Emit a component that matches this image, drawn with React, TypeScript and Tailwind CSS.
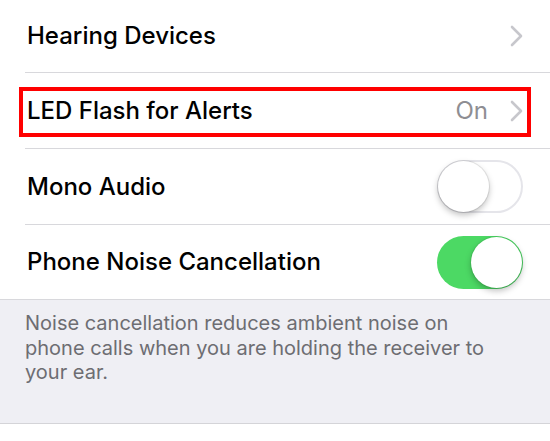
import React from "react";

function Chevron() {
  return (
    <svg width="13" height="22" viewBox="0 0 13 22" className="shrink-0">
      <path d="M2 2 L11 11 L2 20" fill="none" stroke="#c7c7cc" strokeWidth="2.6" strokeLinecap="round" strokeLinejoin="round" />
    </svg>
  );
}

function Toggle({ on }: { on: boolean }) {
  if (on) {
    return (
      <div className="relative h-[53px] w-[86px] shrink-0 rounded-full bg-[#4cd964]">
        <div className="absolute right-[1px] top-[1px] h-[51px] w-[51px] rounded-full bg-white shadow-[0_3px_6px_rgba(0,0,0,0.25),0_0_0_1px_rgba(0,0,0,0.06)]" />
      </div>
    );
  }
  return (
    <div className="relative h-[53px] w-[86px] shrink-0 rounded-full border-2 border-[#e5e5ea] bg-white">
      <div className="absolute left-[-1px] top-[-1px] h-[51px] w-[51px] rounded-full bg-white shadow-[0_3px_6px_rgba(0,0,0,0.25),0_0_0_1px_rgba(0,0,0,0.08)]" />
    </div>
  );
}

export default function App() {
  const font = { fontFamily: "Inter, 'Noto Sans', sans-serif" };
  return (
    <div className="h-[441px] w-[550px] overflow-hidden bg-white" style={font}>
      <div className="flex h-[72px] items-center justify-between pl-[27px] pr-[27px]">
        <span className="text-[24px] font-medium text-black">Hearing Devices</span>
        <Chevron />
      </div>
      <div className="ml-[25px] h-px bg-[#d8d8dc]" />
      <div className="relative flex h-[75px] items-center justify-between pl-[27px] pr-[27px]">
        <span className="text-[24px] font-medium text-black">LED Flash for Alerts</span>
        <div className="flex items-center gap-[22px]">
          <span className="text-[24px] text-[#8e8e93]">On</span>
          <Chevron />
        </div>
        <div className="absolute left-[19px] top-[14px] h-[50px] w-[512px] border-4 border-[#ff0000]" />
      </div>
      <div className="ml-[25px] h-px bg-[#d8d8dc]" />
      <div className="flex h-[75px] items-center justify-between pl-[27px] pr-[27px]">
        <span className="text-[24px] font-medium text-black">Mono Audio</span>
        <Toggle on={false} />
      </div>
      <div className="ml-[25px] h-px bg-[#d8d8dc]" />
      <div className="flex h-[74px] items-center justify-between pl-[27px] pr-[27px]">
        <span className="text-[24px] font-medium text-black">Phone Noise Cancellation</span>
        <Toggle on={true} />
      </div>
      <div className="h-px bg-[#d8d8dc]" />
      <div className="h-[123px] bg-[#efeff4] pl-[25px] pr-[30px] pt-[11px]">
        <p className="text-[20px] leading-[24.5px] text-[#6d6d72]">
          Noise cancellation reduces ambient noise on
          <br />
          phone calls when you are holding the receiver to
          <br />
          your ear.
        </p>
      </div>
      <div className="h-px bg-[#d4d4d8]" />
    </div>
  );
}
